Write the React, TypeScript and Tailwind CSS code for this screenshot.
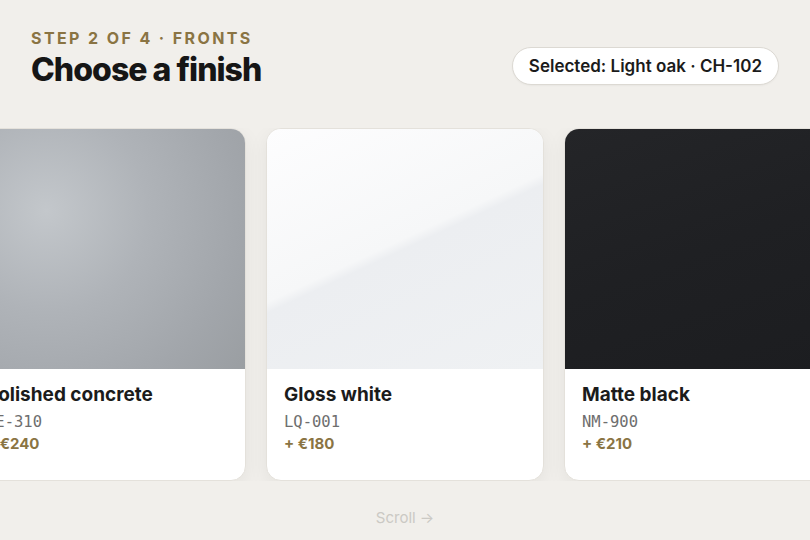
import React from 'react';

type Finish = {
  name: string;
  code: string;
  price: string;
  swatch: string;
};

const finishes: Finish[] = [
  {
    name: 'Polished concrete',
    code: 'CE-310',
    price: '+ €240',
    swatch: 'bg-[radial-gradient(circle_at_28%_34%,#c3c7cb_0%,#afb3b8_40%,#a2a6ab_75%,#9a9ea2_100%)]',
  },
  {
    name: 'Gloss white',
    code: 'LQ-001',
    price: '+ €180',
    swatch: 'bg-[linear-gradient(155deg,#fdfdfe_0%,#f6f7f8_47%,#eceef1_50%,#eff1f3_100%)]',
  },
  {
    name: 'Matte black',
    code: 'NM-900',
    price: '+ €210',
    swatch: 'bg-[linear-gradient(160deg,#242528_0%,#1f2023_50%,#1c1d20_100%)]',
  },
];

function FinishCard({ finish }: { finish: Finish }) {
  return (
    <div className="w-[278px] shrink-0 rounded-[15px] border border-[#e4e1db] bg-white overflow-hidden shadow-[0_6px_20px_rgba(40,35,25,0.06)]">
      <div className={`h-[240px] ${finish.swatch}`} />
      <div className="px-[17px] pt-[13px] pb-[26px]">
        <div className="text-[19px] leading-[26px] font-bold text-[#1b1b1b]">{finish.name}</div>
        <div className="mt-[4px] text-[15.5px] leading-[20px] text-[#6e6e6e] font-['DejaVu_Sans_Mono',monospace]">
          {finish.code}
        </div>
        <div className="mt-[2px] text-[15px] leading-[20px] font-bold text-[#8a7443]">{finish.price}</div>
      </div>
    </div>
  );
}

export default function App() {
  return (
    <div className="w-[810px] h-[540px] overflow-hidden bg-[#f1efeb] font-['Inter',sans-serif] flex flex-col">
      <header className="flex items-end justify-between px-[31px] pt-[29px]">
        <div>
          <div className="text-[16px] leading-[18px] font-bold tracking-[0.15em] text-[#8a7443]">
            STEP 2 OF 4 · FRONTS
          </div>
          <h1 className="mt-[3px] text-[32px] leading-[40px] font-extrabold tracking-[-0.03em] text-[#161616]">
            Choose a finish
          </h1>
        </div>
        <div className="mb-[5px] rounded-full border border-[#dcd9d3] bg-white px-[16px] py-[8px] text-[17px] leading-[20px] font-semibold text-[#1b1b1b] shadow-[0_1px_2px_rgba(0,0,0,0.04)]">
          Selected: Light oak · CH-102
        </div>
      </header>

      <div className="mt-[38px] overflow-hidden">
        <div className="flex gap-[20px] -ml-[32px]">
          {finishes.map((f) => (
            <FinishCard key={f.code} finish={f} />
          ))}
        </div>
      </div>

      <div className="mt-[27px] text-center text-[15px] leading-[20px] text-[#cbc9c4]">Scroll →</div>
    </div>
  );
}
